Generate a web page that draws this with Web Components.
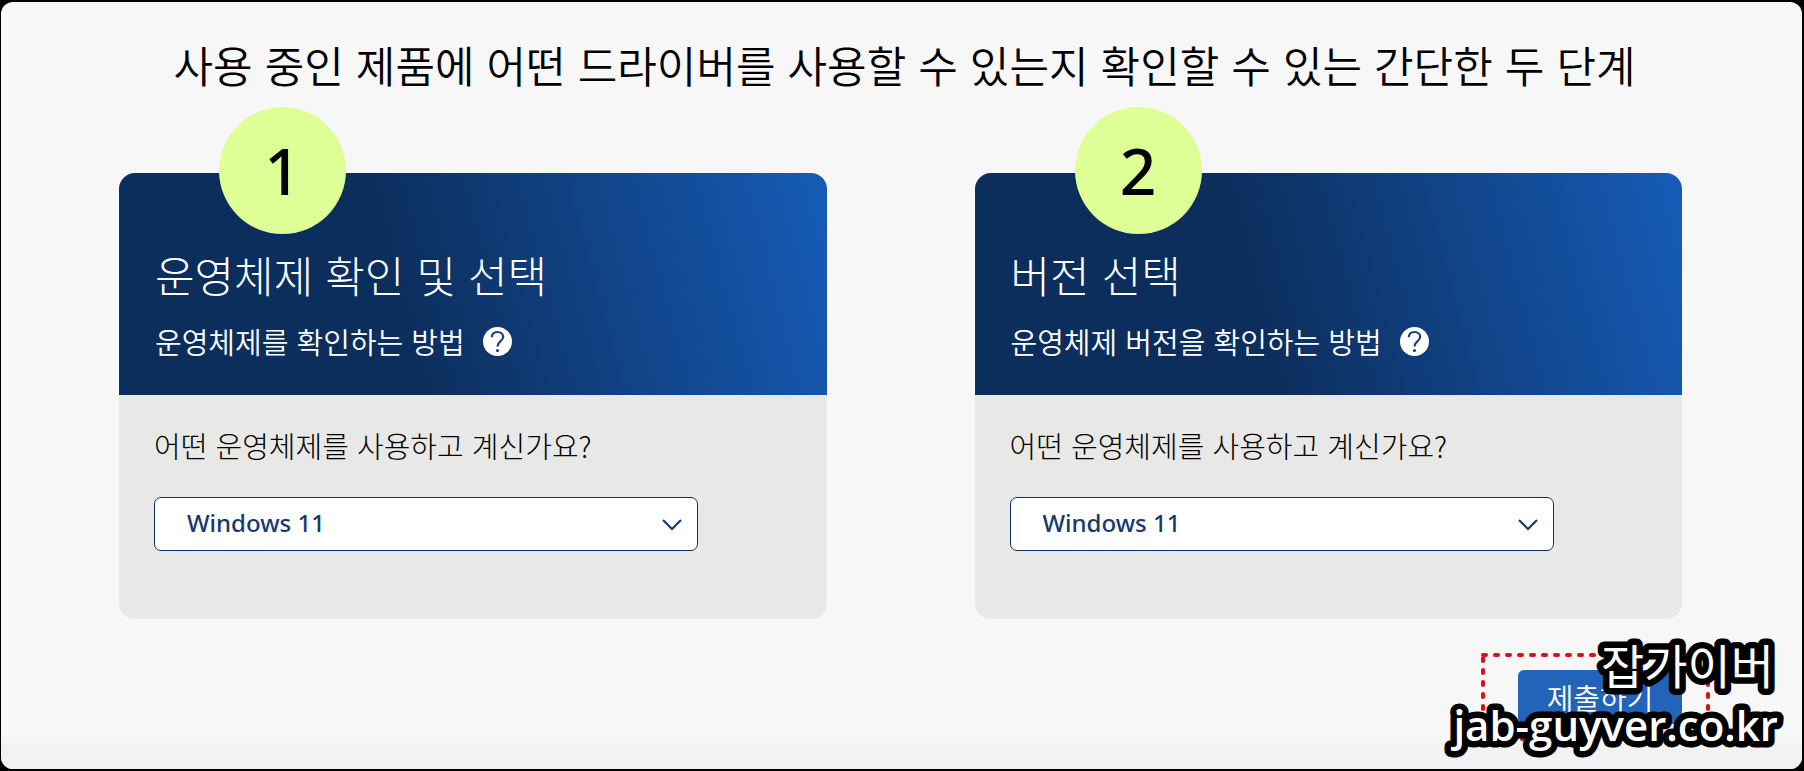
<!DOCTYPE html>
<html lang="ko">
<head>
<meta charset="utf-8">
<meta name="viewport" content="width=device-width, initial-scale=1">
<title>드라이버 확인</title>
<style>
html, body { margin: 0; background: #000; }
body { font-family: "Noto Sans CJK KR", sans-serif; font-weight: 300; color: #000; }
</style>
</head>
<body>
<driver-page>
  <step-card number="1" name="os">
    <span slot="title">운영체제 확인 및 선택</span>
    <span slot="help">운영체제를 확인하는 방법</span>
    <span slot="question">어떤 운영체제를 사용하고 계신가요?</span>
  </step-card>
  <step-card number="2" name="version">
    <span slot="title">버전 선택</span>
    <span slot="help">운영체제 버전을 확인하는 방법</span>
    <span slot="question">어떤 운영체제를 사용하고 계신가요?</span>
  </step-card>
  <submit-button slot="action">제출하기</submit-button>
  <site-mark slot="mark"></site-mark>
</driver-page>

<template id="page-template">
  <style>
    :host { display: block; box-sizing: border-box; min-height: 100vh; padding: 2px 2px 2px 1px; }
    main { position: relative; display: flex; flex-direction: column; box-sizing: border-box; min-height: calc(100vh - 4px); background: #f7f7f7; border-radius: 12px; overflow: hidden; }
    .content { flex: 1; padding: 30px 120px 19px 118px; }
    h1 { margin: 0; padding-left: 8px; font-size: 43px; line-height: 64px; font-weight: 350; text-align: center; }
    .cards { display: grid; grid-template-columns: 1fr 1fr; gap: 148px; margin-top: 77px; }
    .actions { display: flex; justify-content: flex-end; margin-top: 51px; }
    footer { height: 26px; background: #f2f2f2; }
  </style>
  <main>
    <div class="content">
      <h1>사용 중인 제품에 어떤 드라이버를 사용할 수 있는지 확인할 수 있는 간단한 두 단계</h1>
      <div class="cards"><slot></slot></div>
      <div class="actions"><slot name="action"></slot></div>
    </div>
    <footer></footer>
    <slot name="mark"></slot>
  </main>
</template>

<template id="card-template">
  <style>
    :host { display: block; position: relative; }
    .badge { position: absolute; left: 100px; top: -66px; width: 127px; height: 127px; border-radius: 50%; background: #ddff95; display: grid; place-items: center; font: 500 64px/127px "Noto Sans", sans-serif; color: #000; }
    header { box-sizing: border-box; height: 222px; padding: 71px 36px 0; border-radius: 16px 16px 0 0; color: #fff; background: linear-gradient(75deg, #0c2e5c 40%, #165cb8 100%); }
    h2 { margin: 0; font-size: 43px; line-height: 60px; font-weight: 300; }
    .help { display: flex; align-items: center; gap: 18px; margin-top: 15px; font-size: 29px; line-height: 44px; font-weight: 350; }
    button { display: block; width: 29px; height: 29px; padding: 0; border: 0; background: none; }
    svg { display: block; }
    .body { box-sizing: border-box; min-height: 224px; padding: 28px 35px 68px; border-radius: 0 0 16px 16px; background: #e8e8e7; }
    label { display: block; font-size: 29px; line-height: 44px; color: #000; }
    .field { position: relative; max-width: 544px; margin-top: 30px; }
    select { appearance: none; display: block; box-sizing: border-box; width: 100%; height: 54px; padding: 0 60px 2px 32px; border: 1px solid #0f2f62; border-radius: 7px; background: #fff; color: #16396f; font: 500 24px/50px "Noto Sans", sans-serif; }
    .field svg { position: absolute; right: 15px; top: 21px; pointer-events: none; }
  </style>
  <header>
    <h2><slot name="title"></slot></h2>
    <div class="help">
      <slot name="help"></slot>
      <button type="button" aria-label="도움말">
        <svg width="29" height="29" viewBox="0 0 29 29" fill="none">
          <circle cx="14.5" cy="14.5" r="14.5" fill="#fff"/>
          <path d="M8.800 10.200C9 6.800 11.300 5 14.500 5S20.200 6.800 20.200 9.800c0 4.400-5.700 4.200-5.700 9.600" stroke="#17427d" stroke-width="2.200"/>
          <circle cx="14.500" cy="23.500" r="1.600" fill="#17427d"/>
        </svg>
      </button>
    </div>
  </header>
  <div class="body">
    <label for="choice"><slot name="question"></slot></label>
    <div class="field">
      <select id="choice"><option>Windows 11</option></select>
      <svg width="22" height="14" viewBox="0 0 22 14" fill="none"><path d="M2 2l9 9 9-9" stroke="#16396f" stroke-width="2.200"/></svg>
    </div>
  </div>
  <div class="badge"></div>
</template>

<template id="button-template">
  <style>
    :host { display: block; position: relative; }
    button { display: block; box-sizing: border-box; width: 164px; height: 54px; padding: 0; border: 0; border-radius: 6px; background: #2264b9; color: #fff; font: 350 29px/54px "Noto Sans CJK KR", sans-serif; }
    svg { position: absolute; left: -38px; top: -18px; pointer-events: none; }
  </style>
  <button type="submit"><slot></slot></button>
  <svg width="232" height="90" viewBox="0 0 232 90" fill="none"><rect x="3" y="3" width="225" height="84" stroke="#d80f16" stroke-width="4" stroke-dasharray="3 9" stroke-linecap="round"/></svg>
</template>

<template id="mark-template">
  <style>
    :host { display: block; position: absolute; right: 0; bottom: 0; pointer-events: none; }
    svg { display: block; }
    text { fill: #fff; stroke: #000; stroke-width: 13px; stroke-linejoin: round; paint-order: stroke fill; text-anchor: end; }
    .name { font: 400 47px "Noto Sans CJK KR", sans-serif; }
    .address { font: 600 42px "Open Sans", sans-serif; }
  </style>
  <svg width="370" height="160" viewBox="0 0 370 160">
    <text class="name" x="342" y="75">잡가이버</text>
    <text class="address" x="346" y="132">jab-guyver.co.kr</text>
  </svg>
</template>

<script>
class TemplateElement extends HTMLElement {
  constructor() {
    super();
    this.attachShadow({ mode: "open" })
      .append(document.getElementById(this.constructor.template).content.cloneNode(true));
  }
}
customElements.define("driver-page", class extends TemplateElement {
  static template = "page-template";
});
customElements.define("step-card", class extends TemplateElement {
  static template = "card-template";
  connectedCallback() {
    this.shadowRoot.querySelector(".badge").textContent = this.getAttribute("number");
    this.shadowRoot.querySelector("select").name = this.getAttribute("name");
  }
});
customElements.define("submit-button", class extends TemplateElement {
  static template = "button-template";
});
customElements.define("site-mark", class extends TemplateElement {
  static template = "mark-template";
});
</script>
</body>
</html>
